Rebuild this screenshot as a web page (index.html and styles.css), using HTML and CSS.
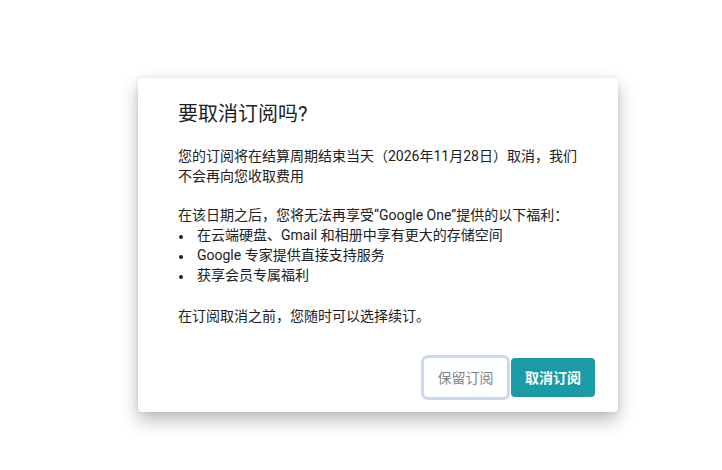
FILE: index.html
```html
<!DOCTYPE html>
<html lang="zh-CN">
<head>
    <meta charset="UTF-8">
    <meta name="viewport" content="width=device-width, initial-scale=1.0">
    <title>取消订阅</title>
    <link rel="stylesheet" href="styles.css">
</head>
<body>
    <div class="dialog">
        <h2 class="dialog-title">要取消订阅吗?</h2>
        <p>您的订阅将在结算周期结束当天（2026年11月28日）取消，我们不会再向您收取费用</p>
        <p class="lead">在该日期之后，您将无法再享受“Google One”提供的以下福利：</p>
        <ul class="benefits">
            <li>在云端硬盘、Gmail 和相册中享有更大的存储空间</li>
            <li>Google 专家提供直接支持服务</li>
            <li>获享会员专属福利</li>
        </ul>
        <p>在订阅取消之前，您随时可以选择续订。</p>
        <div class="actions">
            <button class="btn btn-keep">保留订阅</button>
            <button class="btn btn-cancel">取消订阅</button>
        </div>
    </div>
</body>
</html>
```

FILE: styles.css
```css
body {
    font-family: Roboto, "Noto Sans CJK SC", sans-serif;
    margin: 0;
    padding: 78px 0 60px 138px;
    background-color: #fff;
    color: #202124;
}

.dialog {
    width: 480px;
    box-sizing: border-box;
    padding: 24px 23px 15px 40px;
    background: #fff;
    border-radius: 4px;
    box-shadow: 0 8px 18px rgba(0, 0, 0, 0.28), 0 0 4px rgba(0, 0, 0, 0.08);
    font-size: 14px;
    line-height: 19.6px;
}

.dialog-title {
    margin: 0 0 21px;
    font-size: 20px;
    font-weight: normal;
    line-height: 24px;
    color: #202124;
}

.dialog p {
    margin: 0 17px 19.6px 0;
}

.dialog p.lead {
    margin-bottom: 1px;
}

.benefits {
    list-style: none;
    margin: 0 0 22px;
    padding: 0;
}

.benefits li {
    position: relative;
    padding-left: 19px;
}

.benefits li::before {
    content: "";
    position: absolute;
    left: 1px;
    top: 9px;
    width: 4px;
    height: 4px;
    border-radius: 50%;
    background: #202124;
}

.actions {
    display: flex;
    justify-content: flex-end;
    gap: 4px;
    margin-top: 31px;
}

.btn {
    font-family: inherit;
    font-size: 14px;
    height: 39px;
    padding: 0 12px;
    border-radius: 4px;
    border: none;
    cursor: pointer;
}

.btn-keep {
    width: 83px;
    background: #fff;
    color: #80868b;
    box-shadow: 0 0 0 3px #c9d9f3;
}

.btn-cancel {
    width: 84px;
    background: #1a9ba6;
    color: #fff;
    font-weight: bold;
}
```
